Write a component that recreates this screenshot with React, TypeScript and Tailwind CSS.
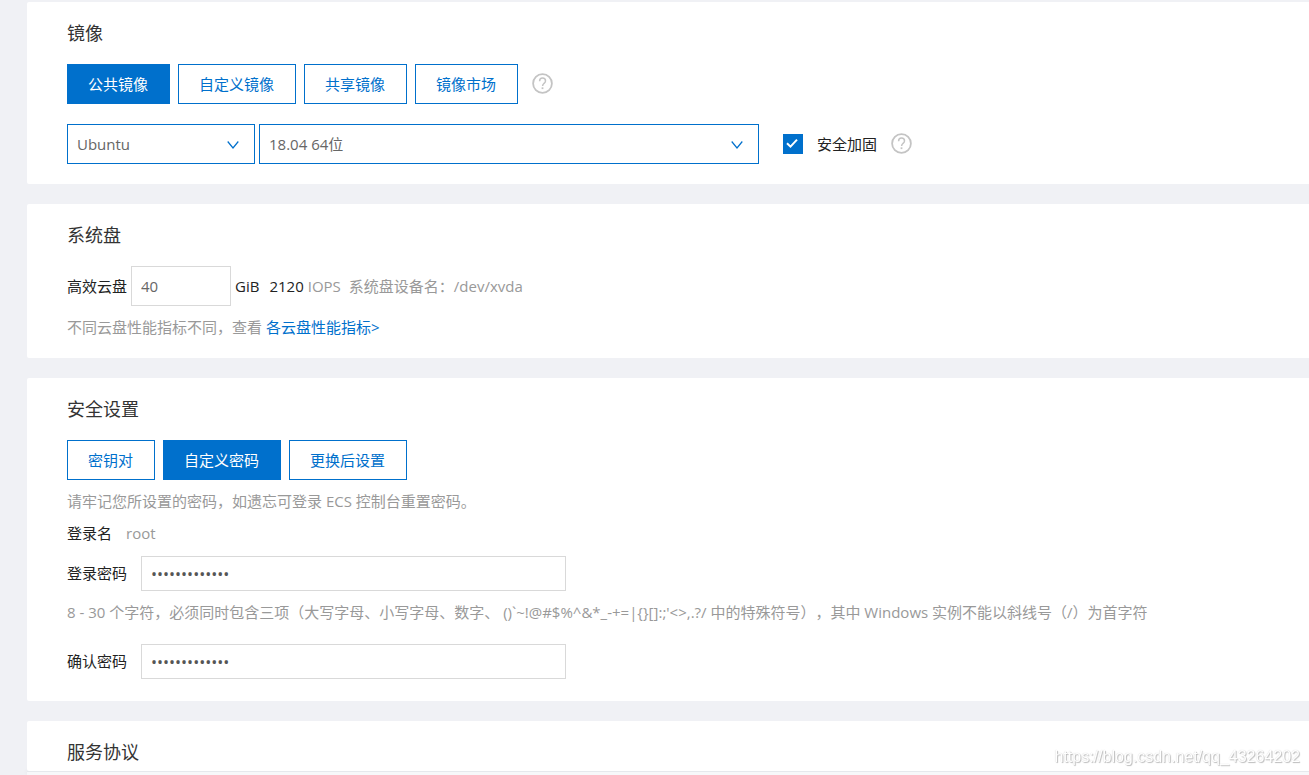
import React, { useState } from "react";

interface SectionProps {
  title: string;
  className?: string;
  children?: React.ReactNode;
}

function Section({ title, className = "", children }: SectionProps) {
  return (
    <section className={`rounded-l-xs bg-white px-10 pt-[19px] ${className}`}>
      <h2 className="text-lg/6 text-[#333]">{title}</h2>
      {children}
    </section>
  );
}

interface ButtonGroupProps {
  options: string[];
  value: string;
  onChange: (value: string) => void;
}

function ButtonGroup({ options, value, onChange }: ButtonGroupProps) {
  return (
    <div className="flex gap-2">
      {options.map((option) => (
        <button
          key={option}
          type="button"
          aria-pressed={option === value}
          onClick={() => onChange(option)}
          className={`h-10 border border-[#0070cc] pr-[21px] pl-5 ${
            option === value ? "bg-[#0070cc] text-white" : "bg-white text-[#0070cc]"
          }`}
        >
          {option}
        </button>
      ))}
    </div>
  );
}

interface SelectProps {
  label: string;
  options: string[];
  className: string;
}

function Select({ label, options, className }: SelectProps) {
  return (
    <div className={`relative ${className}`}>
      <select
        aria-label={label}
        className="h-10 w-full appearance-none border border-[#0070cc] bg-white px-[9px] text-[#666]"
      >
        {options.map((option) => (
          <option key={option}>{option}</option>
        ))}
      </select>
      <svg
        viewBox="0 0 12 8"
        fill="none"
        stroke="#0070cc"
        strokeWidth="1.2"
        className="pointer-events-none absolute top-[17px] right-4 h-2 w-3"
      >
        <path d="M0.7 0.5 6 7 11.3 0.5" />
      </svg>
    </div>
  );
}

function HelpIcon() {
  return (
    <button type="button" aria-label="帮助" className="pb-0.5">
      <svg viewBox="0 0 21 21" fill="none" stroke="#c4c4c4" strokeWidth="1.8" className="size-[21px]">
        <circle cx="10.5" cy="10.5" r="9.4" />
        <path
          strokeWidth="1.5"
          d="M7.6 8.2c0-1.9 1.1-3.1 2.9-3.1s3 1.1 3 2.8c0 1.3-.8 1.9-1.6 2.6-.8.7-1.3 1.2-1.3 2.6"
        />
        <path d="M10.5 14.3v1.8" />
      </svg>
    </button>
  );
}

function PasswordField({ id, label, value }: { id: string; label: string; value: string }) {
  return (
    <div className="flex items-center gap-3.5">
      <label htmlFor={id} className="pb-0.5">
        {label}
      </label>
      <input
        id={id}
        type="password"
        defaultValue={value}
        className="h-[35px] w-full max-w-[425px] border border-[#d9d9d9] px-[9px] text-base text-[#555]"
      />
    </div>
  );
}

export default function App() {
  const [image, setImage] = useState("公共镜像");
  const [credential, setCredential] = useState("自定义密码");

  return (
    <main className="bg-[#f0f1f5] pt-0.5 pl-[27px] font-['Open_Sans','Noto_Sans_CJK_SC',sans-serif] text-[15px]/5 font-[390] text-[#222] [text-spacing-trim:space-all]">
      <div className="flex flex-col gap-5">
        <Section title="镜像" className="pb-5">
          <div className="mt-[19px] flex items-center gap-3.5">
            <ButtonGroup
              options={["公共镜像", "自定义镜像", "共享镜像", "镜像市场"]}
              value={image}
              onChange={setImage}
            />
            <HelpIcon />
          </div>
          <div className="mt-5 flex items-center gap-1">
            <Select label="操作系统" options={["Ubuntu", "CentOS", "Debian"]} className="w-[188px]" />
            <Select label="版本" options={["18.04 64位", "16.04 64位"]} className="w-[500px]" />
            <label className="ml-5 flex items-center gap-3.5">
              <span className="relative flex size-5">
                <input
                  type="checkbox"
                  defaultChecked
                  className="peer size-5 appearance-none border border-[#0070cc] checked:bg-[#0070cc]"
                />
                <svg
                  viewBox="0 0 20 20"
                  fill="none"
                  stroke="white"
                  strokeWidth="2"
                  className="pointer-events-none absolute inset-0 hidden peer-checked:block"
                >
                  <path d="M4 9.2 7.5 12.6 14 5.6" />
                </svg>
              </span>
              安全加固
            </label>
            <span className="ml-2.5 flex">
              <HelpIcon />
            </span>
          </div>
        </Section>

        <Section title="系统盘" className="pb-[21px]">
          <div className="mt-[19px] flex items-center gap-1">
            <label htmlFor="disk-size">高效云盘</label>
            <input
              id="disk-size"
              type="text"
              defaultValue="40"
              className="h-10 w-[100px] border border-[#d9d9d9] px-[9px] text-[#666]"
            />
            <span>GiB</span>
            <span className="ml-1.5">2120</span>
            <span className="text-[#999]">IOPS</span>
            <span className="ml-1 text-[#999]">系统盘设备名：/dev/xvda</span>
          </div>
          <p className="mt-[11px] text-[#999]">
            不同云盘性能指标不同，查看{" "}
            <a href="#disk-performance" className="text-[#0070cc]">
              各云盘性能指标&gt;
            </a>
          </p>
        </Section>

        <Section title="安全设置" className="pb-[22px]">
          <div className="mt-[19px]">
            <ButtonGroup
              options={["密钥对", "自定义密码", "更换后设置"]}
              value={credential}
              onChange={setCredential}
            />
          </div>
          <p className="mt-[11px] text-[#999]">
            请牢记您所设置的密码，如遗忘可登录 ECS 控制台重置密码。
          </p>
          <div className="mt-3 mb-[13px] flex gap-3.5">
            <span>登录名</span>
            <span className="text-[#999]">root</span>
          </div>
          <PasswordField id="password" label="登录密码" value="Ecs-Ubuntu-18" />
          <p className="mt-[11px] mb-[22px] text-[#999]">
            8 - 30 个字符，必须同时包含三项（大写字母、小写字母、数字、{" "}
            {"()`~!@#$%^&*_-+=|{}[]:;'<>,.?/"} 中的特殊符号），其中 Windows
            实例不能以斜线号（/）为首字符
          </p>
          <PasswordField id="password-confirm" label="确认密码" value="Ecs-Ubuntu-18" />
        </Section>

        <Section title="服务协议" className="pb-[7px]" />
      </div>

      <footer className="h-1 border-t border-[#e6e9ed] bg-[#f7f8fa] shadow-[0_-1px_4px_rgba(0,0,0,0.06)]" />
      <span className="fixed right-[9px] bottom-2 font-['Liberation_Sans',sans-serif] text-base/5 font-normal text-white [text-shadow:1px_1px_1px_#bbb,0_0_1px_#ccc]">
        https://blog.csdn.net/qq_43264202
      </span>
    </main>
  );
}
